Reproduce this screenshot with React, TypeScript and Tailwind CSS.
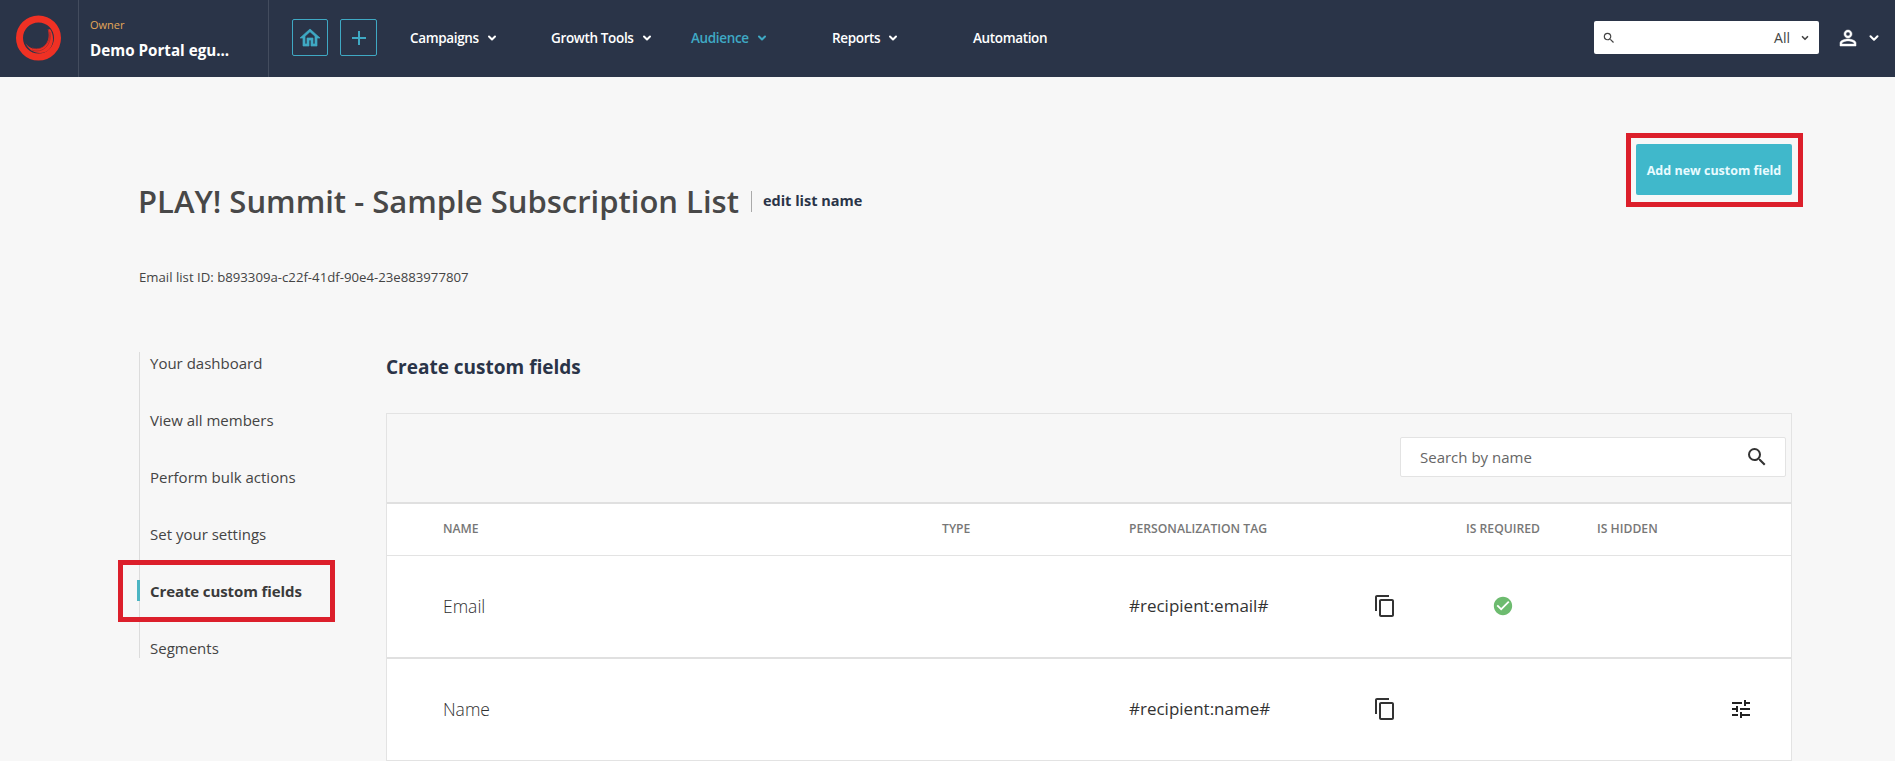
import React from "react";
import { ChevronDown } from "lucide-react";
import { MdAdd, MdCheckCircle, MdContentCopy, MdSearch, MdTune } from "react-icons/md";

function Logo() {
  return (
    <svg width="48" height="48" viewBox="0 0 48 48" fill="none">
      <circle cx="23.5" cy="23" r="19" stroke="#ef3124" strokeWidth="7" />
      <path d="M10 27c3 7 8 11 15 11 8 0 13-6 13-14 0-4-1-7-3-10l-2 1c1 3 1 7 0 10-2 6-7 9-12 9-5 0-9-3-11-7z" fill="#ef3124" />
      <path d="M33 14c2 5 2 10-1 14-3 5-9 7-15 5M35 17c1 5 0 10-3 14-4 5-10 6-15 4" stroke="#a82a2a" strokeWidth="0.8" />
    </svg>
  );
}

function HomeIcon() {
  return (
    <svg width="24" height="24" viewBox="0 0 24 24" fill="currentColor" stroke="currentColor" strokeWidth="0.7">
      <path d="M12 5.69l5 4.5V18h-2v-6H9v6H7v-7.81l5-4.5M12 3L2 12h3v8h6v-6h2v6h6v-8h3L12 3z" />
    </svg>
  );
}

function PersonIcon() {
  return (
    <svg width="24" height="24" viewBox="0 0 24 24" fill="currentColor" stroke="currentColor" strokeWidth="0.5">
      <path d="M12 5.9a2.1 2.1 0 110 4.2 2.1 2.1 0 010-4.2m0 9c2.97 0 6.1 1.46 6.1 2.1v1.1H5.9V17c0-.64 3.13-2.1 6.1-2.1M12 4C9.79 4 8 5.79 8 8s1.79 4 4 4 4-1.79 4-4-1.79-4-4-4zm0 9c-2.67 0-8 1.34-8 4v3h16v-3c0-2.66-5.33-4-8-4z" />
    </svg>
  );
}

function NavItem({ label, w, active, chevron = true }: { label: string; w: string; active?: boolean; chevron?: boolean }) {
  return (
    <div className={`flex items-center gap-[7px] text-[13.5px] font-semibold tracking-[-0.35px] ${w} ${active ? "text-[#3fa9c4]" : "text-white"}`}>
      <span>{label}</span>
      {chevron && <ChevronDown size={12} strokeWidth={4} />}
    </div>
  );
}

function Top() {
  return (
    <header className="flex h-[77px] items-stretch bg-[#2a3448]">
      <div className="flex w-[79px] items-center justify-center border-r border-[#434c5e] pr-[1px]">
        <Logo />
      </div>
      <div className="flex w-[190px] flex-col border-r border-[#434c5e] pl-[11px] pt-[17px]">
        <span className="text-[11px] leading-[15px] font-medium text-[#e2a758]">Owner</span>
        <span className="mt-[8px] text-[15.2px] leading-[20px] font-bold text-white">Demo Portal egu...</span>
      </div>
      <div className="ml-[23px] flex items-center gap-[12px] pb-[2px]">
        <div className="flex h-[37px] w-[36px] items-center justify-center rounded-[2px] border border-[#3fa9c4] text-[#3fa9c4]">
          <HomeIcon />
        </div>
        <div className="flex h-[37px] w-[37px] items-center justify-center rounded-[2px] border border-[#3fa9c4] text-[#3fa9c4]">
          <MdAdd className="text-[24px]" />
        </div>
      </div>
      <nav className="ml-[33px] flex items-center pb-[1px]">
        <NavItem label="Campaigns" w="w-[141px]" />
        <NavItem label="Growth Tools" w="w-[140px]" />
        <NavItem label="Audience" w="w-[141px]" active />
        <NavItem label="Reports" w="w-[141px]" />
        <NavItem label="Automation" w="w-[100px]" chevron={false} />
      </nav>
      <div className="ml-auto flex items-center pb-[2px]">
        <div className="flex h-[33px] w-[225px] items-center rounded-[2px] bg-white pl-[8px] pr-[9px] text-[#444]">
          <MdSearch className="text-[14px]" />
          <span className="ml-auto text-[14px]">All</span>
          <ChevronDown className="ml-[10px]" size={10} strokeWidth={4} />
        </div>
        <div className="ml-[17px] mr-[14px] flex items-center gap-[7px] text-white">
          <PersonIcon />
          <ChevronDown size={14} strokeWidth={3.5} />
        </div>
      </div>
    </header>
  );
}

function Side() {
  const items = ["Your dashboard", "View all members", "Perform bulk actions", "Set your settings", "Create custom fields", "Segments"];
  return (
    <aside className="mt-[66px] h-[306px] w-[247px] shrink-0 border-l border-[#dcdcdc]">
      {items.map((t) => {
        const active = t === "Create custom fields";
        return (
          <div key={t} className={`relative flex h-[57px] items-center pl-[10px] pb-[1px] first:h-[22px] first:mb-[18px] first:pb-0 text-[15px] ${active ? "font-bold tracking-[-0.1px] text-[#3a3a3a]" : "text-[#444]"}`}>
            {active && (
              <>
                <span className="absolute -left-[3px] top-[17px] h-[21px] w-[3px] bg-[#4cb5c3]" />
                <span className="absolute -left-[22px] top-[-3px] h-[62px] w-[217px] border-[5px] border-[#dc1f2b]" />
              </>
            )}
            {t}
          </div>
        );
      })}
    </aside>
  );
}

const cols = "grid grid-cols-[499px_187px_243px_94px_131px_1fr] items-center pl-[56px]";

function Table() {
  return (
    <div className="mt-[33px] border border-b-0 border-[#e3e3e3]">
      <div className="flex h-[90px] justify-end border-b-2 border-[#e0e0e0] pb-[2px] pr-[5px] pt-[23px]">
        <div className="flex h-[40px] w-[386px] items-center justify-between rounded-[2px] border border-[#e3e3e3] bg-white pl-[19px] pr-[16px] text-[#555]">
          <span className="text-[15px] text-[#666]">Search by name</span>
          <MdSearch className="text-[24px] text-[#333]" />
        </div>
      </div>
      <div className={`${cols} h-[52px] border-b border-[#e3e3e3] bg-white pb-[1px] text-[12.2px] font-semibold text-[#777]`}>
        <span>NAME</span>
        <span>TYPE</span>
        <span className="col-span-2">PERSONALIZATION TAG</span>
        <span>IS REQUIRED</span>
        <span>IS HIDDEN</span>
      </div>
      <div className={`${cols} h-[103px] border-b-2 border-[#e0e0e0] bg-white pb-[1px] text-[17px] text-[#444]`}>
        <span className="text-[17.5px] font-light text-[#2f2f2f]">Email</span>
        <span />
        <span className="text-[#333]">#recipient:email#</span>
        <MdContentCopy className="ml-[1px] text-[24px] text-[#333]" />
        <span className="pl-[26px]"><MdCheckCircle className="text-[22px] text-[#6dbb6f]" /></span>
        <span />
      </div>
      <div className={`${cols} h-[102px] border-b border-[#e3e3e3] bg-white pb-[1px] text-[17px] text-[#444]`}>
        <span className="text-[17.5px] font-light text-[#2f2f2f]">Name</span>
        <span />
        <span className="text-[#333]">#recipient:name#</span>
        <MdContentCopy className="ml-[1px] text-[24px] text-[#333]" />
        <span />
        <span className="flex justify-end pr-[38px]"><MdTune className="text-[24px] text-[#222]" /></span>
      </div>
    </div>
  );
}

export default function App() {
  return (
    <div className="h-[761px] overflow-hidden bg-[#f7f7f7] font-['Open_Sans','Noto_Sans',sans-serif] text-[#444]">
      <Top />
      <main className="pl-[139px] pr-[103px]">
        <div className="flex items-start justify-between">
          <div className="mt-[102px] flex items-center">
            <h1 className="-ml-[1px] text-[31px] leading-[44px] font-semibold text-[#484848]">PLAY! Summit - Sample Subscription List</h1>
            <span className="ml-[12px] h-[21px] w-px bg-[#aaa]" />
            <span className="ml-[11px] text-[14.5px] font-bold text-[#2a3448]">edit list name</span>
          </div>
          <div className="relative mt-[67px]">
            <button className="h-[51px] w-[156px] rounded-[2px] bg-[#40b8cb] pt-[4px] text-[12.5px] font-bold text-[#e9fbff]">Add new custom field</button>
            <span className="absolute -bottom-[12px] -left-[10px] -right-[11px] -top-[11px] border-[5px] border-[#dc1f2b]" />
          </div>
        </div>
        <p className="mt-[45px] text-[13.2px] leading-[18px] text-[#444]">Email list ID: b893309a-c22f-41df-90e4-23e883977807</p>
        <div className="flex">
          <Side />
          <section className="mt-[68px] min-w-0 flex-1">
            <h2 className="text-[19px] leading-[26px] font-bold text-[#2a3448]">Create custom fields</h2>
            <Table />
          </section>
        </div>
      </main>
    </div>
  );
}
